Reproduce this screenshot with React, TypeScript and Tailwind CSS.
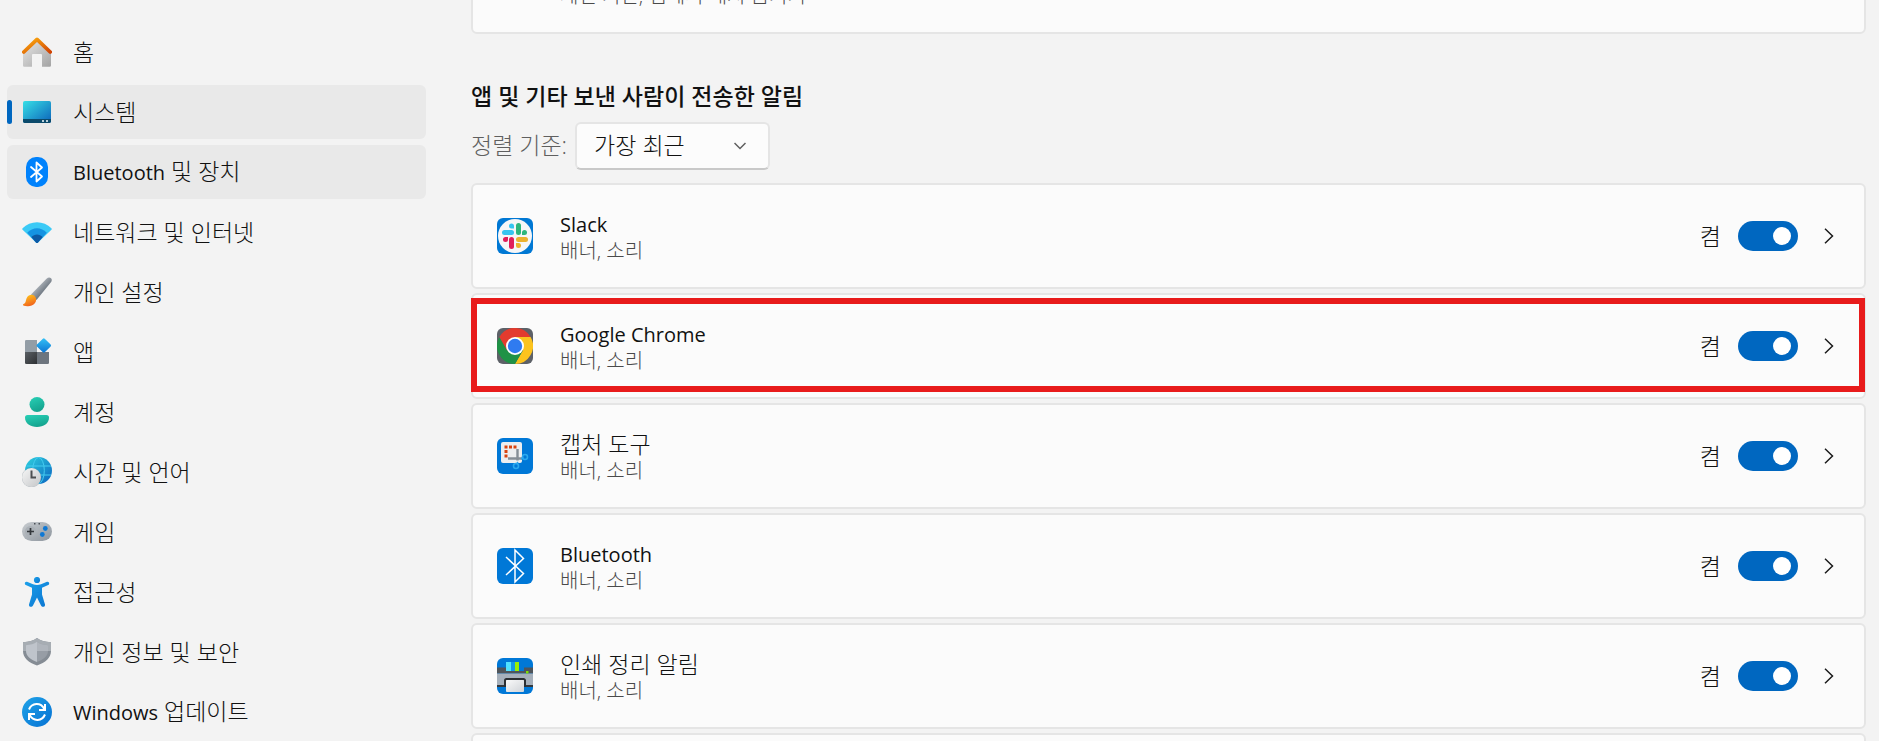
import React from 'react';

const icons = {
  home: (
    <svg viewBox="0 0 30 30" className="size-[30px]">
      <defs>
        <linearGradient id="homeWall" x1="0" y1="0" x2="1" y2="1">
          <stop offset="0" stopColor="#e6e6e6" />
          <stop offset="1" stopColor="#a3a3a3" />
        </linearGradient>
        <linearGradient id="homeRoof" x1="0" y1="0" x2="1" y2="1">
          <stop offset="0.2" stopColor="#f59a0c" />
          <stop offset="1" stopColor="#d04304" />
        </linearGradient>
      </defs>
      <path d="M15 4 29 17v11.500a1.300 1.300 0 0 1-1.300 1.300H20V18a1 1 0 0 0-1-1h-8a1 1 0 0 0-1 1v11.800H2.300A1.300 1.300 0 0 1 1 28.500V16z" fill="url(#homeWall)" />
      <path d="M1.800 15 15 2.400 28.200 15" fill="none" stroke="url(#homeRoof)" strokeWidth="3.800" strokeLinecap="round" strokeLinejoin="round" />
    </svg>
  ),
  system: (
    <svg viewBox="0 0 30 30" className="size-[30px]">
      <defs>
        <linearGradient id="sysScreen" x1="0" y1="0" x2="1" y2="1">
          <stop offset="0" stopColor="#37dfe6" />
          <stop offset="1" stopColor="#0c62ba" />
        </linearGradient>
      </defs>
      <rect x="1" y="4" width="28" height="22" rx="1.800" fill="url(#sysScreen)" />
      <path d="M1 22h28v2.200a1.800 1.800 0 0 1-1.800 1.800H2.800A1.800 1.800 0 0 1 1 24.200z" fill="#0b4a6b" />
      <path d="M20 23h2v2h-2zM24 23h2v2h-2z" fill="#b9cfda" />
    </svg>
  ),
  bluetooth: (
    <svg viewBox="0 0 30 30" className="size-[30px]">
      <rect x="4" width="22" height="30" rx="10" fill="#0082fc" />
      <path d="m9 10 11 9.500-5.500 5V5.500l5.500 5L9 20" fill="none" stroke="#fff" strokeWidth="1.800" strokeLinecap="round" strokeLinejoin="round" />
    </svg>
  ),
  network: (
    <svg viewBox="0 0 30 30" className="size-[30px]">
      <path d="M.6 11.300C8 3.200 22 3.200 29.400 11.300c.5.600.5 1 0 1.500L16 25.400c-.7.700-1.300.7-2 0L.6 12.800c-.5-.5-.5-.9 0-1.500z" fill="#3bcaf6" />
      <path d="M5.200 15.800c5.600-6 14-6 19.600 0L16 25.400c-.7.700-1.300.7-2 0z" fill="#1593e2" />
      <path d="M9.300 20c3.300-3.500 8.100-3.500 11.400 0L16 25.400c-.7.700-1.300.7-2 0z" fill="#0c59a4" />
    </svg>
  ),
  brush: (
    <svg viewBox="0 0 30 30" className="size-[30px]">
      <defs>
        <linearGradient id="brushStick" x1="0.300" y1="0.300" x2="0.700" y2="0.700">
          <stop offset="0" stopColor="#b5bac0" />
          <stop offset="1" stopColor="#606a75" />
        </linearGradient>
        <linearGradient id="brushTip" x1="0.300" y1="0" x2="0.700" y2="1">
          <stop offset="0" stopColor="#ffc21c" />
          <stop offset="1" stopColor="#ef5b1c" />
        </linearGradient>
      </defs>
      <path d="M9 17.500 24.500 1.700C27.500-1 31 1.600 29.300 4.700L14.500 23z" fill="url(#brushStick)" />
      <path d="M5 20.500c2-3.800 7.700-3.500 9 .7 1 4-2.600 7.800-8 8-3 .1-5.500-.5-5-1.700.4-.7 1.700-.5 2.300-1.900.6-1.500.7-3.300 1.700-5.100z" fill="url(#brushTip)" />
    </svg>
  ),
  apps: (
    <svg viewBox="0 0 30 30" className="size-[30px]">
      <defs>
        <linearGradient id="appsDark" x1="0" y1="0" x2="1" y2="1">
          <stop offset="0" stopColor="#5a5f64" />
          <stop offset="1" stopColor="#2d3033" />
        </linearGradient>
        <linearGradient id="appsBlue" x1="0" y1="0" x2="1" y2="1">
          <stop offset="0" stopColor="#35c3f7" />
          <stop offset="1" stopColor="#0a72d2" />
        </linearGradient>
      </defs>
      <path d="M4.300 3H15v12H3V4.300A1.300 1.300 0 0 1 4.300 3z" fill="#939da6" />
      <path d="M3 15h12v12H4.300A1.300 1.300 0 0 1 3 25.700z" fill="url(#appsDark)" />
      <path d="M15 15h12v10.700a1.300 1.300 0 0 1-1.300 1.300H15z" fill="#6d757e" />
      <rect x="16.300" y="3" width="11" height="11" rx="1.300" transform="rotate(45 21.800 8.500)" fill="url(#appsBlue)" />
    </svg>
  ),
  account: (
    <svg viewBox="0 0 30 30" className="size-[30px]">
      <defs>
        <linearGradient id="accBody" x1="0" y1="0" x2="0.400" y2="1">
          <stop offset="0" stopColor="#28d0b6" />
          <stop offset="1" stopColor="#15a48f" />
        </linearGradient>
      </defs>
      <circle cx="15" cy="7.500" r="7.500" fill="url(#accBody)" />
      <path d="M5.500 18h19a2.500 2.500 0 0 1 2.500 2.500C27 26.500 21.500 30 15 30S3 26.500 3 20.500A2.500 2.500 0 0 1 5.500 18z" fill="url(#accBody)" />
    </svg>
  ),
  time: (
    <svg viewBox="0 0 30 30" className="size-[30px]">
      <defs>
        <linearGradient id="timeGlobe" x1="0" y1="0" x2="1" y2="1">
          <stop offset="0" stopColor="#2fd3df" />
          <stop offset="1" stopColor="#0a62c0" />
        </linearGradient>
        <linearGradient id="timeFace" x1="0" y1="0" x2="1" y2="1">
          <stop offset="0" stopColor="#f6f6f6" />
          <stop offset="1" stopColor="#c4c6c8" />
        </linearGradient>
      </defs>
      <circle cx="16.500" cy="13.500" r="13.500" fill="url(#timeGlobe)" />
      <g fill="none" stroke="#45cdf0" strokeWidth="1">
        <ellipse cx="16.500" cy="13.500" rx="5.800" ry="13" />
        <path d="M4.500 9h24.500M4.500 18h24.500" />
      </g>
      <circle cx="9.500" cy="20.500" r="9.800" fill="#7a8a93" opacity="0.450" />
      <circle cx="9.500" cy="20.500" r="9.400" fill="url(#timeFace)" />
      <path d="M9.500 13.500v7H14" fill="none" stroke="#4c4f52" strokeWidth="2" />
    </svg>
  ),
  game: (
    <svg viewBox="0 0 30 30" className="size-[30px]">
      <defs>
        <linearGradient id="gamePad" x1="0" y1="0" x2="1" y2="1">
          <stop offset="0" stopColor="#c8ccd0" />
          <stop offset="1" stopColor="#8d959d" />
        </linearGradient>
      </defs>
      <rect y="5" width="30" height="19" rx="9.500" fill="url(#gamePad)" />
      <circle cx="8.500" cy="14.500" r="5.500" fill="#aab0b6" />
      <path d="M8.500 11v7M5 14.500h7" stroke="#34383c" strokeWidth="1.700" />
      <circle cx="23.300" cy="11.500" r="2.400" fill="#0f78d4" />
      <circle cx="20.300" cy="17.500" r="2.400" fill="#0f78d4" />
      <path d="M12 6h1.500v1.500H12zM16.500 6H18v1.500h-1.500z" fill="#4b5157" />
    </svg>
  ),
  access: (
    <svg viewBox="0 0 30 30" className="size-[30px]">
      <defs>
        <linearGradient id="accMan" x1="0" y1="0" x2="1" y2="1">
          <stop offset="0" stopColor="#1ba0ea" />
          <stop offset="1" stopColor="#0b74d0" />
        </linearGradient>
      </defs>
      <circle cx="15" cy="3" r="3.100" fill="url(#accMan)" />
      <path d="M5 4.800 11 7.300c2.600 1 5.400 1 8 0l6-2.500c2.200-.6 3 2.300 1.200 3.200L20 10.800v6.700l3 10c.4 2.500-3 3.300-4 1l-4-8-4 8c-1 2.300-4.400 1.500-4-1l3-10v-6.700L3.800 8C2 7.100 2.800 4.200 5 4.800z" fill="url(#accMan)" />
    </svg>
  ),
  shield: (
    <svg viewBox="0 0 30 30" className="size-[30px]">
      <path d="M15 1c3.400 2.900 8 4 14 4.200V14c0 7-5.500 11.500-14 14.500C6.500 25.500 1 21 1 14V5.200C7 5 11.600 3.900 15 1z" fill="#858c94" />
      <path d="M15 1c3.400 2.900 8 4 14 4.200V14H1V5.200C7 5 11.600 3.900 15 1z" fill="#a7adb3" />
      <path d="M15 4.800V25C8.500 22.500 4 19 4 14V8.200c4.500-.3 8-1.200 11-3.400z" fill="#bfc4cb" />
      <path d="M15 4.800V25c6.500-2.500 11-6 11-11V8.200c-4.500-.3-8-1.200-11-3.400z" fill="#979da5" />
      <path d="M15 4.800V14h11V8.200c-4.500-.3-8-1.200-11-3.400z" fill="#b0b5bc" />
    </svg>
  ),
  update: (
    <svg viewBox="0 0 30 30" className="size-[30px]">
      <defs>
        <linearGradient id="updBall" x1="0" y1="0" x2="1" y2="1">
          <stop offset="0" stopColor="#1fa3e8" />
          <stop offset="1" stopColor="#0671d3" />
        </linearGradient>
      </defs>
      <circle cx="15" cy="15" r="15" fill="url(#updBall)" />
      <path d="M7 12.500C9.800 5.800 18.500 5 22.300 12M23 17.500C20.200 24.200 11.500 25 7.700 18" fill="none" stroke="#fff" strokeWidth="2" />
      <path d="M23 7v6h-6M7 23v-6h6" fill="none" stroke="#fff" strokeWidth="2" />
    </svg>
  ),
};

const appIcons = {
  slack: (
    <svg viewBox="0 0 36 36" className="size-9 rounded-md">
      <rect width="36" height="36" fill="#0078d4" />
      <circle cx="18" cy="18" r="17" fill="#f6f6f7" />
      <g fill="#36c5f0">
        <rect x="5" y="12" width="12" height="5" rx="2.500" />
        <path d="M17 10.500h-2.500A2.500 2.500 0 1 1 17 8z" />
      </g>
      <g fill="#2eb67d">
        <rect x="19" y="5" width="5" height="12" rx="2.500" />
        <path d="M25 17v-2.500a2.500 2.500 0 1 1 2.500 2.500z" />
      </g>
      <g fill="#ecb22e">
        <rect x="19" y="19" width="12" height="5" rx="2.500" />
        <path d="M19 25h2.500a2.500 2.500 0 1 1-2.500 2.500z" />
      </g>
      <g fill="#e01e5a">
        <rect x="12" y="19" width="5" height="12" rx="2.500" />
        <path d="M11 19v2.500A2.500 2.500 0 1 1 8.500 19z" />
      </g>
    </svg>
  ),
  chrome: (
    <svg viewBox="0 0 36 36" className="size-9 rounded-md">
      <rect width="36" height="36" fill="#5d6168" />
      <path d="M18 9h15.600A18 18 0 0 1 18 36l7.800-13.500z" fill="#fcc31e" />
      <path d="M10.200 22.500 2.400 9A18 18 0 0 0 18 36l7.800-13.500z" fill="#1f9246" />
      <path d="M10.200 22.500 2.400 9a18 18 0 0 1 31.200 0H18z" fill="#e33b2e" />
      <circle cx="18" cy="18" r="9" fill="#fff" />
      <circle cx="18" cy="18" r="7.200" fill="#2f7bf0" />
    </svg>
  ),
  snip: (
    <svg viewBox="0 0 36 36" className="size-9 rounded-md">
      <rect width="36" height="36" fill="#0078d7" />
      <rect x="4" y="4" width="21" height="21" rx="2" fill="#eceef0" />
      <path d="M7.500 7.500h3v3h-3zM12 7.500h3v3h-3zM16.500 7.500h3v3h-3zM7.500 12h3v3h-3zM7.500 16.500h3v3h-3z" fill="#d8430f" />
      <path d="M20.500 11v11.500M11 20.500h14" stroke="#858e96" strokeWidth="2.400" />
      <path d="m24 21 2.500-1.500M21 24l-1.500 2" stroke="#29a3ea" strokeWidth="1.500" />
      <circle cx="28" cy="19" r="2.500" fill="none" stroke="#2aa9ee" strokeWidth="1.600" />
      <circle cx="19" cy="28" r="2.500" fill="none" stroke="#2aa9ee" strokeWidth="1.600" />
    </svg>
  ),
  bluetooth: (
    <svg viewBox="0 0 36 36" className="size-9 rounded-md">
      <rect width="36" height="36" fill="#0078d7" />
      <path d="m9 9 17.500 16.500L18 34V2l8.500 8.500L9 27" fill="none" stroke="#fff" strokeWidth="1.500" />
    </svg>
  ),
  printer: (
    <svg viewBox="0 0 36 36" className="size-9 rounded-md">
      <defs>
        <linearGradient id="paper" x1="0" y1="0" x2="1" y2="1">
          <stop offset="0" stopColor="#fafafa" />
          <stop offset="1" stopColor="#cfd3d8" />
        </linearGradient>
      </defs>
      <rect width="36" height="36" fill="#0078d7" />
      <path d="M0 9.500h36v6H0z" fill="#4f555b" />
      <path d="M9 4h18v9H9z" fill="#0078d7" />
      <path d="M9 4h5v9H9z" fill="#50e2ff" />
      <path d="M14 4h4v9h-4z" fill="#139be8" />
      <path d="M18 4h4v9h-4z" fill="#98ef05" />
      <path d="M0 15.500h36V27H0z" fill="#a6b0bb" />
      <path d="M29 13h2.500v2.500H29z" fill="#7fe002" />
      <path d="M0 27h8v2H0zM28 27h8v2h-8z" fill="#33383d" />
      <path d="M8 29v-6.500A1.500 1.500 0 0 1 9.500 21h17a1.500 1.500 0 0 1 1.500 1.500V29" fill="none" stroke="#2b2f33" strokeWidth="2" />
      <path d="M8 29h20v5H8z" fill="#0078d7" />
      <rect x="9" y="22" width="18" height="12" rx="1" fill="url(#paper)" />
    </svg>
  ),
};

const navItems = [
  { id: 'home', label: '홈', icon: icons.home },
  { id: 'system', label: '시스템', icon: icons.system, active: true },
  { id: 'bluetooth', latin: 'Bluetooth', label: ' 및 장치', icon: icons.bluetooth, hovered: true },
  { id: 'network', label: '네트워크 및 인터넷', icon: icons.network },
  { id: 'personal', label: '개인 설정', icon: icons.brush },
  { id: 'apps', label: '앱', icon: icons.apps },
  { id: 'accounts', label: '계정', icon: icons.account },
  { id: 'time', label: '시간 및 언어', icon: icons.time },
  { id: 'gaming', label: '게임', icon: icons.game },
  { id: 'access', label: '접근성', icon: icons.access },
  { id: 'privacy', label: '개인 정보 및 보안', icon: icons.shield },
  { id: 'update', latin: 'Windows', label: ' 업데이트', icon: icons.update },
];

const senders = [
  { id: 'slack', latin: 'Slack', label: '', icon: appIcons.slack },
  { id: 'chrome', latin: 'Google Chrome', label: '', icon: appIcons.chrome, marked: true },
  { id: 'snip', label: '캡처 도구', icon: appIcons.snip },
  { id: 'bt', latin: 'Bluetooth', label: '', icon: appIcons.bluetooth },
  { id: 'print', label: '인쇄 정리 알림', icon: appIcons.printer },
];

const Label: React.FC<{ latin?: string; text: string }> = ({ latin, text }) => (
  <>
    {latin && <span className="text-[20px] font-normal">{latin}</span>}
    {text}
  </>
);

const Sidebar: React.FC = () => (
  <nav className="w-[426px] shrink-0 pl-[7px] pt-[25px]">
    <ul className="flex flex-col gap-1.5">
      {navItems.map((item) => (
        <li key={item.id}>
          <a
            href="#"
            className={`relative flex h-[54px] items-center gap-[21px] rounded-md pl-[15px] text-[23px] leading-8 whitespace-pre ${
              item.active || item.hovered ? 'bg-[#e9e9e9]' : ''
            }`}
          >
            {item.active && <span className="absolute top-[15px] left-0 h-6 w-[5px] rounded-full bg-[#0067c0]" />}
            {item.icon}
            <span>
              <Label latin={item.latin} text={item.label} />
            </span>
          </a>
        </li>
      ))}
    </ul>
  </nav>
);

const App: React.FC = () => {
  return (
    <div className='flex h-screen overflow-hidden bg-[#f3f3f3] font-["Open_Sans","Noto_Sans_CJK_KR",sans-serif] font-light text-[#111111]'>
      <Sidebar />

      <main className="min-w-0 flex-1 pr-[13px] pl-[45px]">
        {/* Focus card, scrolled partly out of view */}
        <section className="-mt-[72px] flex h-[106px] items-center rounded-md border-2 border-[#e5e5e5] bg-[#fbfbfb] pl-[87px]">
          <div className="pt-1">
            <h3 className="text-[23px] leading-[25px]">집중</h3>
            <p className="text-[20px] leading-7 text-[#4a4a4a]">세션 기간, 앱에서 배지 숨기기</p>
          </div>
        </section>

        <h2 className="mt-[46px] text-[23px] leading-8 font-medium">앱 및 기타 보낸 사람이 전송한 알림</h2>

        <div className="mt-2.5 flex h-12 items-center gap-2">
          <label htmlFor="sort" className="pb-0.5 text-[23px] leading-8 text-[#5f5f5f]">
            정렬 기준:
          </label>
          <div className="relative">
            <select
              id="sort"
              className="h-12 w-[195px] appearance-none rounded-md border-2 border-[#e5e5e5] border-b-[#c9c9c9] bg-[#fcfcfc] pb-0.5 pl-[17px] text-[23px]"
            >
              <option>가장 최근</option>
              <option>이름</option>
            </select>
            <svg viewBox="0 0 12 8" className="pointer-events-none absolute top-5 right-6 h-2 w-3" fill="none" stroke="#5f5f5f" strokeWidth="1.500">
              <path d="m.5 1 5.500 5.500L11.500 1" />
            </svg>
          </div>
        </div>

        <ul className="mt-[13px] flex flex-col gap-1">
          {senders.map((sender) => (
            <li
              key={sender.id}
              className="relative flex h-[106px] shrink-0 items-center rounded-md border-2 border-[#e5e5e5] bg-[#fbfbfb] pr-[30px] pl-6"
            >
              {sender.icon}
              <div className="ml-[27px] flex-1 pt-1">
                <h3 className="text-[23px] leading-[25px]">
                  <Label latin={sender.latin} text={sender.label} />
                </h3>
                <p className="text-[20px] leading-7 text-[#4a4a4a]">배너, 소리</p>
              </div>
              <label htmlFor={sender.id} className="mr-[17px] text-[23px]">
                켬
              </label>
              <input
                id={sender.id}
                type="checkbox"
                role="switch"
                defaultChecked
                className="relative h-[30px] w-[60px] appearance-none rounded-full bg-[#8a8a8a] before:absolute before:top-1.5 before:left-[7px] before:size-[18px] before:rounded-full before:bg-white checked:bg-[#0067c0] checked:before:left-[35px]"
              />
              <button type="button" aria-label="자세히" className="ml-[26px]">
                <svg viewBox="0 0 10 16" className="h-4 w-2.5" fill="none" stroke="#1b1b1b" strokeWidth="1.500">
                  <path d="m1 .7 7.500 7.300L1 15.300" />
                </svg>
              </button>
              {sender.marked && (
                <span className="pointer-events-none absolute top-[3px] -right-px bottom-[5px] -left-0.5 border-[6px] border-[#e81b1b]" />
              )}
            </li>
          ))}
          <li className="h-[106px] shrink-0 rounded-md border-2 border-[#e5e5e5] bg-[#fbfbfb]" />
        </ul>
      </main>
    </div>
  );
};

export default App;
